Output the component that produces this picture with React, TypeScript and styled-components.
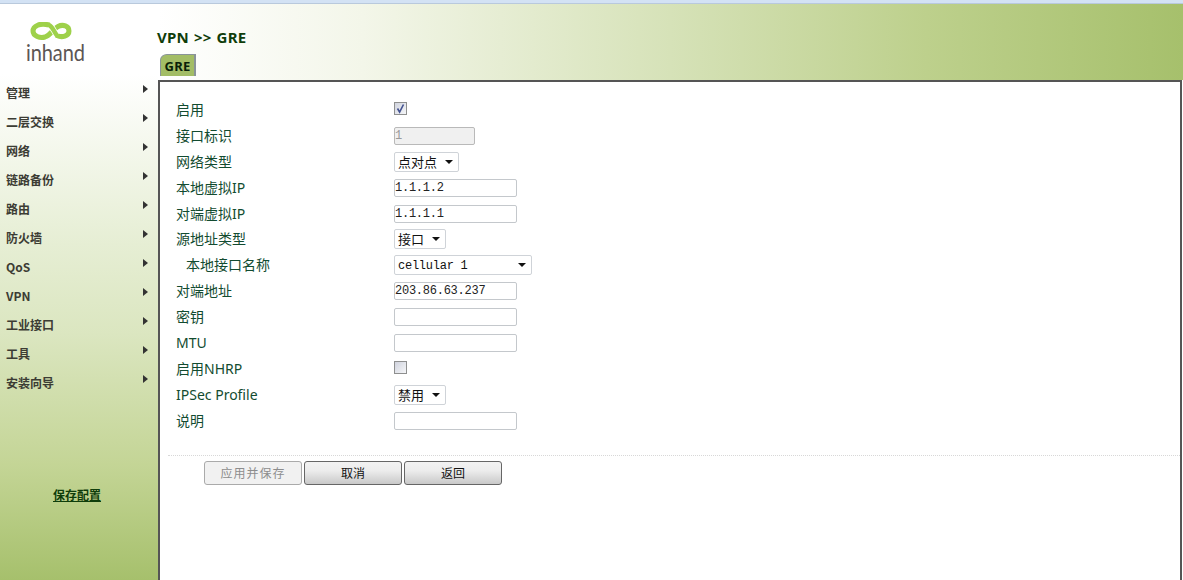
import React from "react";
import styled, { createGlobalStyle } from "styled-components";

const Global = createGlobalStyle`
  html, body { margin: 0; padding: 0; background: #fff; overflow: hidden; }
  * { box-sizing: border-box; }
`;
const cjk = `"Noto Sans CJK SC", "Noto Sans", sans-serif`;
const Page = styled.div`
  width: 1183px; height: 580px; display: flex; flex-direction: column;
  font-family: ${cjk}; overflow: hidden;
`;
const TopStrip = styled.div`
  height: 4px; flex: none; background: #d3e2f4; border-bottom: 1px solid #b9c9dc;
`;
const Body = styled.div`display: flex; flex: 1; min-height: 0;`;
const Sidebar = styled.aside`
  width: 158px; flex: none; display: flex; flex-direction: column;
  background: linear-gradient(to bottom, #ffffff 0, #ffffff 70px, #e6eed4 240px, #dbe6c0 330px, #c4d596 460px, #a6c06c 576px);
`;
const LogoBox = styled.div`
  height: 74px; padding: 18px 0 0 26px; display: flex; flex-direction: column; align-items: flex-start;
`;
const LogoWord = styled.span`
  font: 400 20px/17px Lato, sans-serif; color: #5c5654; letter-spacing: -0.1px; transform: scaleY(1.2); transform-origin: top left;
`;
const Menu = styled.nav`display: flex; flex-direction: column;`;
const MenuItem = styled.div`
  height: 29px; display: flex; justify-content: space-between; padding: 0 10px 0 6px;
  font: 700 12px/29px "Noto Sans CJK SC", "Liberation Sans", sans-serif; color: #3c3c34;
`;
const Arrow = styled.i`
  width: 0; height: 0; margin-top: 7px; border-left: 5px solid #333; border-top: 4px solid transparent; border-bottom: 4px solid transparent;
`;
const SaveLink = styled.a`
  margin: 89px 0 0 53px; font: 700 12px/18px ${cjk}; color: #0f3d0a; text-decoration: underline;
`;
const Main = styled.main`flex: 1; display: flex; flex-direction: column; min-width: 0;`;
const Header = styled.header`
  height: 76px; flex: none; padding: 22px 0 0 0; display: flex; flex-direction: column;
  background: linear-gradient(to right, #ffffff 0, #f3f6e9 20%, #d6e2b8 50%, #bdd08c 75%, #a6c06c 100%);
`;
const Title = styled.h1`
  margin: 0 0 0 -1px; font: 700 15px/22px "Noto Sans", sans-serif; color: #0f3d0a; word-spacing: 1px; letter-spacing: 0.2px;
`;
const Tab = styled.div`
  margin: 6px 0 0 2px; width: 36px; height: 22px; text-align: center;
  background: #a3bd66; border: 1px solid #8a9499; border-right-width: 2px; border-bottom: none;
  border-top-left-radius: 7px 6px; font: 700 13px/22px "Noto Sans", sans-serif; letter-spacing: 0.3px; color: #0a1f08;
`;
const Panel = styled.section`
  flex: 1; margin-right: 1px; background: #fff; border-left: 2px solid #555; border-top: 2px solid #555; border-right: 2px solid #555;
  padding-top: 15px; min-height: 0;
`;
const Row = styled.div`
  height: 25.9px; display: grid; grid-template-columns: 218px auto; align-items: center; justify-items: start; padding-left: 16px;
`;
const Label = styled.span<{ $indent?: boolean }>`
  font: 400 14px/20px "Noto Sans", "Noto Sans CJK SC", sans-serif; color: #124b30; padding-left: ${p => (p.$indent ? 10 : 0)}px;
`;
const TextBox = styled.div<{ $w?: number; $disabled?: boolean }>`
  width: ${p => p.$w ?? 123}px; height: 18px; padding-left: 0;
  border: 1px solid ${p => (p.$disabled ? "#b9b9b9" : "#c4c8cc")}; border-radius: 2px;
  background: ${p => (p.$disabled ? "#f0f0f0" : "#fff")};
  color: ${p => (p.$disabled ? "#9a9a9a" : "#222")};
  font: 400 12px/16px "Liberation Mono", "DejaVu Sans Mono", monospace; letter-spacing: -0.25px;
`;
const SelectBox = styled.div<{ $w: number }>`
  width: ${p => p.$w}px; height: 20px; padding: 0 5px 0 3px; display: flex; align-items: center; justify-content: space-between;
  border: 1px solid #cfd3d8; border-radius: 2px; background: #fff; color: #111;
  font: 400 13px/18px "Noto Sans CJK SC", sans-serif;
`;
const MonoText = styled.span`
  font: 400 12px/16px "Liberation Mono", monospace; letter-spacing: -0.25px; padding-top: 2px;
`;
const Caret = styled.i`
  width: 0; height: 0; border-left: 4px solid transparent; border-right: 4px solid transparent; border-top: 4px solid #111;
`;
const CheckBox = styled.div`
  width: 13px; height: 13px; margin-top: -3px; display: flex; align-items: center; justify-content: center;
  border: 1px solid #8e8f8f; background: linear-gradient(135deg, #d0d3de, #f5f6f8);
`;
const Divider = styled.div`margin: 21px 0 0 8px; border-top: 1px dotted #d8d8d8;`;
const Actions = styled.div`display: flex; gap: 2px; padding: 5px 0 0 44px;`;
const Button = styled.button<{ $disabled?: boolean }>`
  width: 98px; height: 24px; padding: 0; border-radius: 3px;
  border: 1px solid ${p => (p.$disabled ? "#aaa" : "#666")};
  background: ${p => (p.$disabled ? "#f1f1f1" : "linear-gradient(to bottom, #f2f2f2 0, #ececec 40%, #c9c9c9 100%)")};
  color: ${p => (p.$disabled ? "#8d8d8d" : "#111")};
  font: 400 12px/20px ${cjk}; letter-spacing: ${p => (p.$disabled ? "1px" : "0")};
`;

const menu = ["管理", "二层交换", "网络", "链路备份", "路由", "防火墙", "QoS", "VPN", "工业接口", "工具", "安装向导"];

function Logo() {
  return (
    <svg width="42" height="18" viewBox="0 0 42 18" fill="none" style={{ marginLeft: 4, marginBottom: 2 }}>
      <path d="M19 3 C10 0.5 3 4 3 9 C3 14 10 16.5 15 15 C21 13 23 7 28 4.5 C33 2 39 4 39 9 C39 14 32 16 27 13.5"
        stroke="#9ed14a" strokeWidth="5" strokeLinecap="round" />
      <path d="M19 3 C23 5 24 10 27 13.5" stroke="#ffffff" strokeWidth="6" />
      <path d="M19 3 C23 5 24 10 27 13.5" stroke="#9ed14a" strokeWidth="4.4" strokeLinecap="round" />
    </svg>
  );
}

export default function App() {
  return (
    <Page>
      <Global />
      <TopStrip />
      <Body>
        <Sidebar>
          <LogoBox>
            <Logo />
            <LogoWord>inhand</LogoWord>
          </LogoBox>
          <Menu>
            {menu.map(m => (
              <MenuItem key={m}>{m}<Arrow /></MenuItem>
            ))}
          </Menu>
          <SaveLink>保存配置</SaveLink>
        </Sidebar>
        <Main>
          <Header>
            <Title>VPN &gt;&gt; GRE</Title>
            <Tab>GRE</Tab>
          </Header>
          <Panel>
            <Row><Label>启用</Label>
              <CheckBox>
                <svg width="11" height="11" viewBox="0 0 11 11"><path d="M2.5 5.5 L4.6 9 L8.5 1.5" stroke="#42518f" strokeWidth="1.6" fill="none" /></svg>
              </CheckBox>
            </Row>
            <Row><Label>接口标识</Label><TextBox $w={81} $disabled>1</TextBox></Row>
            <Row><Label>网络类型</Label><SelectBox $w={65}>点对点<Caret /></SelectBox></Row>
            <Row><Label>本地虚拟IP</Label><TextBox>1.1.1.2</TextBox></Row>
            <Row><Label>对端虚拟IP</Label><TextBox>1.1.1.1</TextBox></Row>
            <Row><Label>源地址类型</Label><SelectBox $w={52}>接口<Caret /></SelectBox></Row>
            <Row><Label $indent>本地接口名称</Label><SelectBox $w={138}><MonoText>cellular 1</MonoText><Caret /></SelectBox></Row>
            <Row><Label>对端地址</Label><TextBox>203.86.63.237</TextBox></Row>
            <Row><Label>密钥</Label><TextBox /></Row>
            <Row><Label>MTU</Label><TextBox /></Row>
            <Row><Label>启用NHRP</Label><CheckBox /></Row>
            <Row><Label>IPSec Profile</Label><SelectBox $w={52}>禁用<Caret /></SelectBox></Row>
            <Row><Label>说明</Label><TextBox /></Row>
            <Divider />
            <Actions>
              <Button $disabled>应用并保存</Button>
              <Button>取消</Button>
              <Button>返回</Button>
            </Actions>
          </Panel>
        </Main>
      </Body>
    </Page>
  );
}
